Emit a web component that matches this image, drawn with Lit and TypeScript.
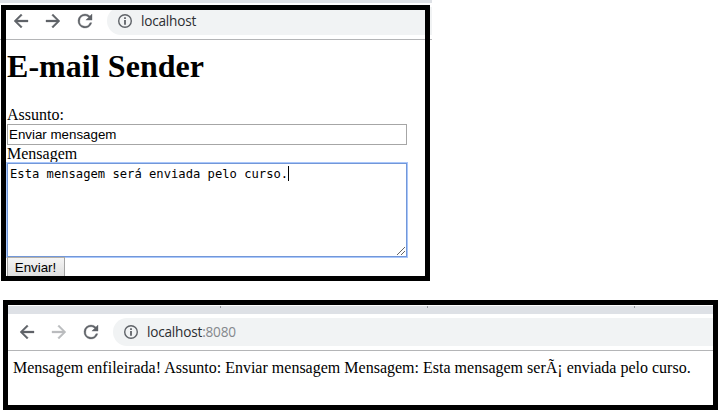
import { LitElement, html, css, svg } from "lit";
import { customElement, property } from "lit/decorators.js";

@customElement("nav-bar")
class NavBar extends LitElement {
  @property() host = "";
  @property() port = "";
  @property({ type: Boolean }) noForward = false;

  static styles = css`
    :host { display: flex; align-items: center; height: 28px; }
    svg { display: block; flex: none; }
    .icon { width: 22px; height: 22px; margin-right: 10px; fill: #5f6368; stroke: #5f6368; stroke-width: 0.4; }
    .off { fill: #babcbe; stroke: #babcbe; }
    .reload { margin-right: 11px; }
    .address {
      flex: 1; height: 28px; display: flex; align-items: center;
      background: #f1f3f4; border-radius: 14px 0 0 14px;
      padding-left: 11px; box-sizing: border-box;
    }
    .info { width: 14px; height: 14px; margin-right: 9px; }
    .url {
      font: 13.6px/20px "Open Sans", "Noto Sans", sans-serif;
      color: #2c2e32; letter-spacing: -0.2px; white-space: nowrap;
    }
    .port { color: #85888c; }
  `;

  render() {
    return html`
      <svg class="icon" viewBox="-0.57 -0.57 25.14 25.14"><path d="M20 11H7.83l5.59-5.59L12 4l-8 8 8 8 1.41-1.41L7.83 13H20v-2z"/></svg>
      <svg class="icon ${this.noForward ? "off" : ""}" viewBox="-0.57 -0.57 25.14 25.14"><path d="M12 4l-1.41 1.41L16.17 11H4v2h12.17l-5.58 5.59L12 20l8-8z"/></svg>
      <svg class="icon reload" viewBox="-0.57 -0.57 25.14 25.14"><path d="M17.65 6.35A7.96 7.96 0 0 0 12 4a8 8 0 1 0 7.73 10h-2.08A6 6 0 1 1 12 6c1.66 0 3.14.69 4.22 1.78L13 11h7V4l-2.35 2.35z"/></svg>
      <div class="address">
        <svg class="info" viewBox="0 0 14 14">
          <circle cx="7" cy="7" r="6.3" fill="none" stroke="#5f6368" stroke-width="1.4"/>
          <path d="M6.1 3.2h1.8v1.8H6.1zM6.1 6.1h1.8v4.7H6.1z" fill="#5f6368"/>
        </svg>
        <div class="url">${this.host}<span class="port">${this.port}</span></div>
      </div>`;
  }
}

@customElement("app-root")
class AppRoot extends LitElement {
  static styles = css`
    :host {
      display: block; width: 719px; height: 418px; overflow: hidden;
      background: #fff; color: #000;
      font: 16px/18px "Liberation Serif", serif;
    }
    .form-window { position: relative; width: 432px; height: 281px; overflow: hidden; }
    .tabs { height: 3px; background: #dee1e6; }
    .form-window nav-bar { margin-top: 4px; padding-left: 10px; }
    .rule { height: 1px; background: #b4b5b7; margin-top: 4px; }
    .frame {
      position: absolute; left: 1px; top: 5px; width: 429px; height: 276px;
      box-sizing: border-box; border: 5px solid #000;
    }
    .page { padding: 8px 0 0 7px; }
    h1 { margin: 0 0 21px; font-size: 32px; line-height: 37px; letter-spacing: 0.05px; }
    .label { height: 18px; }
    input {
      display: block; width: 400px; height: 21px; box-sizing: border-box; margin: 0;
      border: 1px solid #a6a6a6; border-radius: 0; padding: 1px; background: #fff;
      font: 13.333px "Liberation Sans", sans-serif; color: #000; outline: none;
    }
    .area { position: relative; width: 400px; height: 94px; }
    textarea {
      display: block; width: 400px; height: 94px; box-sizing: border-box; margin: 0;
      border: 1px solid #7297d8; box-shadow: 0 0 0 1px #a9c7fb; border-radius: 0;
      padding: 3px 2px 2px; resize: none; outline: none; overflow: hidden; background: #fff;
      font: 12.17px/15px "DejaVu Sans Mono", monospace; color: #000;
    }
    .caret { position: absolute; left: 281px; top: 3px; width: 1px; height: 15px; background: #000; }
    .grip { position: absolute; right: 2px; bottom: 2px; width: 8px; height: 8px; }
    .send {
      display: block; width: 58px; height: 21px; box-sizing: border-box; margin: 0; padding: 0 1px 0 0;
      position: relative; border: 1px solid #a3a3a3; border-top-color: #b5b0a8; border-radius: 0;
      background: linear-gradient(#f5f5f5, #dddddd);
      font: 13.333px "Liberation Sans", sans-serif; color: #000;
    }
    .result-window {
      margin: 19px 0 0 3px; width: 715px; height: 110px; box-sizing: border-box;
      border: 5px solid #000; overflow: hidden;
    }
    .strip { height: 8px; margin-top: 1px; background: #dee1e6; display: flex; padding-left: 212px; gap: 206px; }
    .strip i { width: 1px; height: 2px; background: #96999e; }
    .result-window nav-bar { margin-top: 4px; padding-left: 8px; }
    .result { padding: 8px 0 0 5px; white-space: nowrap; letter-spacing: 0.006px; }
  `;

  render() {
    return html`
      <div class="form-window">
        <div class="tabs"></div>
        <nav-bar host="localhost"></nav-bar>
        <div class="rule"></div>
        <div class="page">
          <h1>E-mail Sender</h1>
          <div class="label">Assunto:</div>
          <input .value=${"Enviar mensagem"} spellcheck="false">
          <div class="label">Mensagem</div>
          <div class="area">
            <textarea spellcheck="false" .value=${"Esta mensagem será enviada pelo curso."}></textarea>
            <div class="caret"></div>
            <svg class="grip" viewBox="0 0 8 8" shape-rendering="crispEdges" fill="#666">
              ${[0, 1, 2, 3, 4, 5, 6, 7].map((i) => svg`<rect x=${i} y=${7 - i} width="1" height="1"/>`)}
              ${[0, 1, 2, 3].map((i) => svg`<rect x=${4 + i} y=${7 - i} width="1" height="1"/>`)}
            </svg>
          </div>
          <button class="send">Enviar!</button>
        </div>
        <div class="frame"></div>
      </div>
      <div class="result-window">
        <div class="strip"><i></i><i></i><i></i></div>
        <nav-bar host="localhost" port=":8080" .noForward=${true}></nav-bar>
        <div class="rule"></div>
        <div class="result">Mensagem enfileirada! Assunto: Enviar mensagem Mensagem: Esta mensagem serÃ¡ enviada pelo curso.</div>
      </div>`;
  }
}
